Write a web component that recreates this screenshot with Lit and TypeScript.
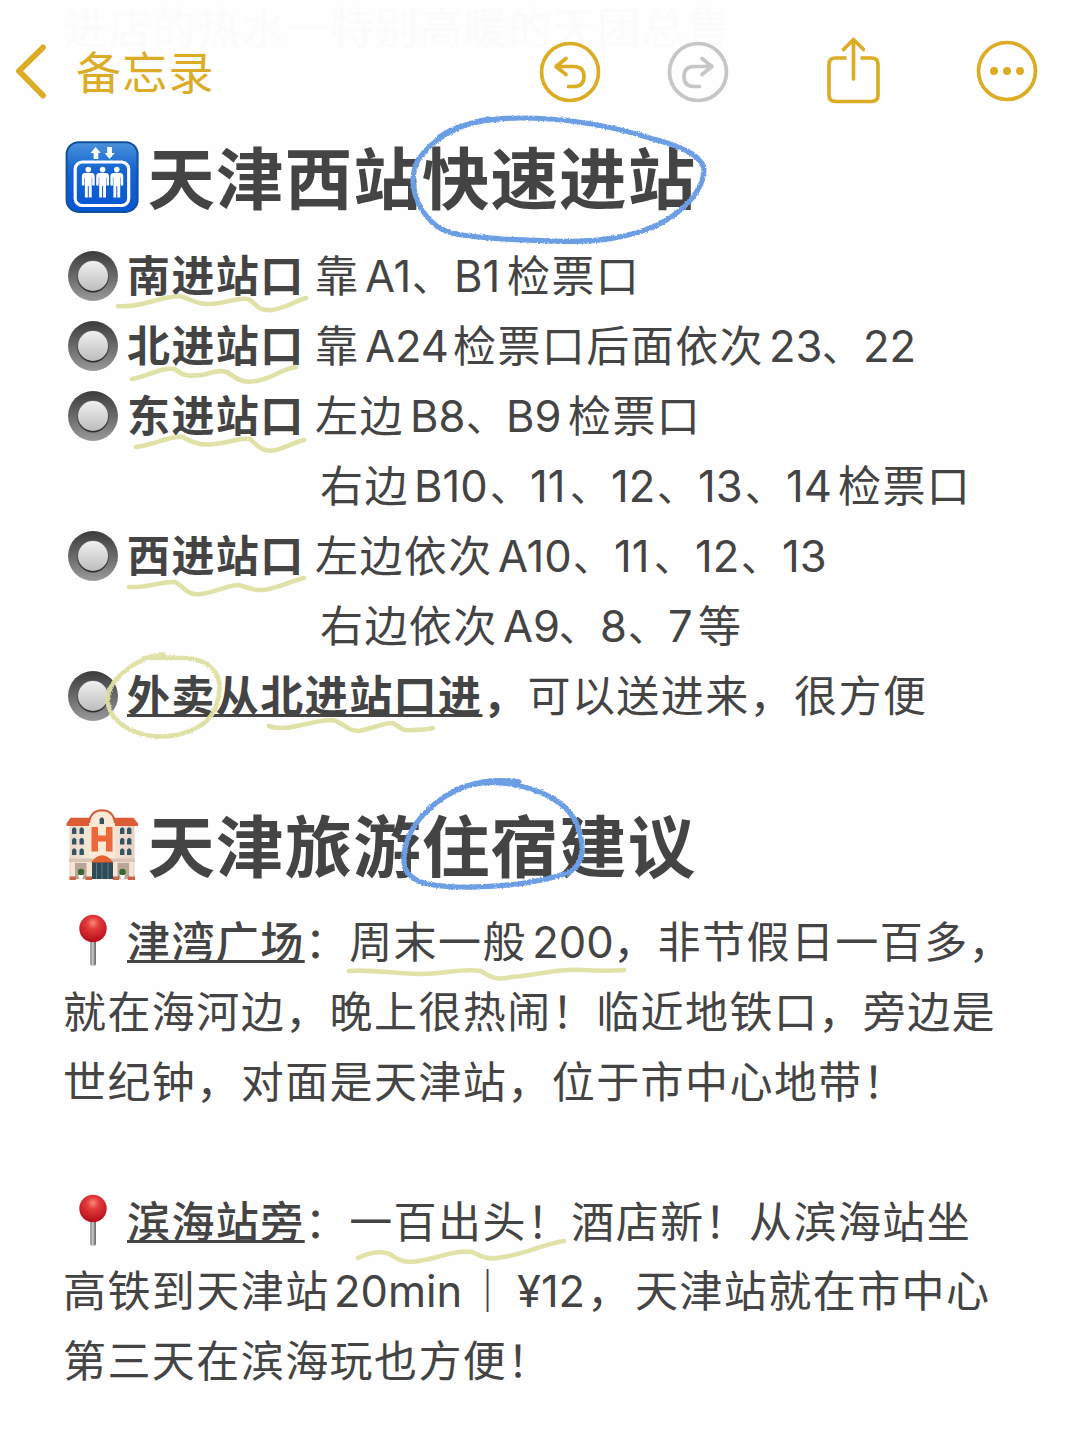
import { LitElement, html, svg, css } from "lit";
import { customElement, property } from "lit/decorators.js";
import { classMap } from "lit/directives/class-map.js";
import { styleMap } from "lit/directives/style-map.js";

interface Run {
  t: string;
  /** Advance width in pixels; natural width when left out. */
  w?: number;
  kind?: "latin" | "bold" | "medium" | "under" | "boldunder" | "bar" | "pause" | "stop";
}
interface Line {
  icon?: "radio" | "pin";
  indent?: boolean;
  runs: Run[];
}

const c = (t: string, w?: number): Run => ({ t, w });
const p = (w: number): Run => ({ t: "、", w, kind: "pause" });
const l = (t: string, w: number): Run => ({ t, w, kind: "latin" });
const b = (t: string, w = 188): Run => ({ t, w, kind: "bold" });

const STATION: Line[] = [
  { icon: "radio", runs: [b("南进站口"), c("靠", 50), l("A1", 47), p(42), l("B1", 53), c("检票口")] },
  { icon: "radio", runs: [b("北进站口"), c("靠", 50), l("A24", 88), c("检票口后面依次", 316), l("23", 53), p(41), l("22", 52)] },
  { icon: "radio", runs: [b("东进站口"), c("左边", 95), l("B8", 56), p(40), l("B9", 62), c("检票口")] },
  { indent: true, runs: [c("右边", 94), l("B10", 76), p(40), l("11", 40), p(41), l("12", 46), p(41), l("13", 47), p(41), l("14", 52), c("检票口")] },
  { icon: "radio", runs: [b("西进站口"), c("左边依次", 183), l("A10", 75), p(41), l("11", 40), p(41), l("12", 46), p(41), l("13", 47)] },
  { indent: true, runs: [c("右边依次", 183), l("A9", 56), p(41), l("8", 28), p(40), l("7", 30), c("等")] },
  { icon: "radio", runs: [{ t: "外卖从北进站口进", kind: "boldunder" }, b("，", 45), c("可以送进来，很方便")] },
];

const HOTELS: Line[] = [
  { icon: "pin", runs: [{ t: "津湾广场", kind: "under" }, c("："), c("周末一般", 183), l("200", 81), c("，"), c("非节假日一百多，")] },
  { runs: [c("就在海河边，晚上很热闹！临近地铁口，旁边是")] },
  { runs: [c("世纪钟，对面是天津站，位于市中心地带！")] },
  { runs: [] },
  { icon: "pin", runs: [{ t: "滨海站旁", kind: "under" }, c("："), c("一百出头！酒店新！从滨海站坐")] },
  { runs: [c("高铁到天津站", 271), l("20min", 132), { t: "｜", kind: "bar", w: 51 }, { t: "¥12", kind: "latin", w: 70 }, c("，", 48), c("天津站就在市中心")] },
  { runs: [c("第三天在滨海玩也方便！")] },
];

const radioIcon = svg`
  <svg width="52" height="52" viewBox="0 0 52 52">
    <defs>
      <linearGradient id="ring" x1="0" y1="0" x2="0" y2="1">
        <stop offset="0" stop-color="#3c3c3c"></stop><stop offset=".5" stop-color="#696969"></stop><stop offset="1" stop-color="#999"></stop>
      </linearGradient>
      <linearGradient id="knob" x1="0" y1="0" x2="0" y2="1">
        <stop offset="0" stop-color="#f0f0f0"></stop><stop offset="1" stop-color="#bdbdbd"></stop>
      </linearGradient>
      <linearGradient id="lip" x1="0" y1="0" x2="0" y2="1">
        <stop offset="0" stop-color="#777"></stop><stop offset="1" stop-color="#2b2b2b"></stop>
      </linearGradient>
    </defs>
    <circle cx="26" cy="26" r="25" fill="url(#ring)"></circle>
    <circle cx="26" cy="26.5" r="16" fill="url(#lip)"></circle>
    <circle cx="26" cy="26" r="15" fill="url(#knob)"></circle>
  </svg>`;

const pinIcon = svg`
  <svg class="pin" width="52" height="52" viewBox="0 0 52 52">
    <defs>
      <radialGradient id="ball" cx=".5" cy=".3" r=".65">
        <stop offset="0" stop-color="#f98a80"></stop><stop offset=".35" stop-color="#e23b3c"></stop><stop offset="1" stop-color="#b9121f"></stop>
      </radialGradient>
      <linearGradient id="needle" x1="0" y1="0" x2="1" y2="0">
        <stop offset="0" stop-color="#777"></stop><stop offset=".45" stop-color="#ccc"></stop><stop offset="1" stop-color="#555"></stop>
      </linearGradient>
    </defs>
    <rect x="23.3" y="26" width="5.6" height="25.5" rx="1.5" fill="url(#needle)"></rect>
    <circle cx="26" cy="14.5" r="13.7" fill="url(#ball)"></circle>
  </svg>`;

const person = (x: number) => svg`
  <g transform="translate(${x} 0)">
    <circle cx="0" cy="29.6" r="2.8"></circle>
    <path d="M-4 33H4Q6.4 33.3 6.4 36V45.5H3.9V37.5H3.4V57.5H.5V46H-.5V57.5H-3.4V37.5H-3.9V45.5H-6.4V36Q-6.4 33.3-4 33Z"></path>
  </g>`;

const liftIcon = svg`
  <svg width="74" height="74" viewBox="0 0 74 74">
    <defs>
      <linearGradient id="lift" x1="0" y1="0" x2="0" y2="1">
        <stop offset="0" stop-color="#4b92da"></stop><stop offset=".4" stop-color="#1464d2"></stop><stop offset="1" stop-color="#0756d3"></stop>
      </linearGradient>
    </defs>
    <rect x="1.6" y="2.3" width="71" height="69.6" rx="12" fill="url(#lift)" stroke="#11509f" stroke-width="2"></rect>
    <rect x="10.2" y="22" width="53.5" height="43.5" rx="7" fill="none" stroke="#fff" stroke-width="3.2"></rect>
    <g fill="#fff">
      ${person(23.3)}${person(37.6)}${person(51.8)}
      <path d="M30.6 7L35.8 13H33.3V19H28.6V13H25.6Z"></path>
      <path d="M44.5 19L39.6 13H42.2V7H46.9V13H49.7Z"></path>
    </g>
  </svg>`;

const win = (x: number, y: number) => svg`<path d="M${x} ${y + 7}V${y + 2}Q${x + 2.2} ${y - 1.5} ${x + 4.4} ${y + 2}V${y + 7}Z"></path>`;

const hotelIcon = svg`
  <svg width="74" height="74" viewBox="0 0 74 74">
    <defs>
      <linearGradient id="wall" x1="0" y1="0" x2="1" y2="0">
        <stop offset="0" stop-color="#ead7c9"></stop><stop offset=".5" stop-color="#fdf0dc"></stop><stop offset="1" stop-color="#e6d0c2"></stop>
      </linearGradient>
    </defs>
    <path d="M4.5 15H69.5V71.5H4.5Z" fill="url(#wall)"></path>
    <path d="M5.5 9.7H68.500L73 15.500V18H1.500V15.500Z" fill="#dd5b35"></path>
    <path d="M24 71V13Q26 3 37 2.600Q48 3 50 13V71Z" fill="#fbe9d5"></path>
    <path d="M24 15Q25.500 2.400 37 2.200Q48.500 2.400 50 15" fill="none" stroke="#d2593b" stroke-width="2"></path>
    <path d="M26.500 19H33V27.500H41V19H47.500V43.500H41V33.500H33V43.500H26.500Z" fill="#ee6739"></path>
    <g fill="#355463">
      ${win(7, 19)}${win(14.500, 19)}${win(55, 19)}${win(62, 19)}
      ${win(7, 29.500)}${win(14.500, 29.500)}${win(55, 29.500)}${win(62, 29.500)}
      ${win(7, 40)}${win(14.500, 40)}${win(55, 40)}${win(62, 40)}
      ${win(34.600, 9)}
    </g>
    <path d="M4 50.500H70V54H4Z" fill="#d9c3b6"></path>
    <path d="M10 55H22V71H10ZM51 55H64V71H51Z" fill="#b9a69b"></path>
    <path d="M27 54H48V71H27Z" fill="#2d4b59"></path>
    <path d="M37 55V71M31.500 55V71M43 55V71" stroke="#617b83" stroke-width="1"></path>
    <path d="M26 54.500Q37 40 48.500 54.500Z" fill="#e4622f"></path>
    <path d="M6 54H10V69H6ZM21.500 54H26V69H21.500ZM48.500 54H52.500V69H48.500ZM64.500 54H68.500V69H64.500Z" fill="#f6e4d4"></path>
    <path d="M4.500 68.500H11V72H4.500ZM20.500 68.500H27V72H20.500ZM48 68.500H54V72H48ZM63 68.500H70V72H63Z" fill="#c9634a"></path>
    <circle cx="16" cy="64" r="3.200" fill="#36682f"></circle><circle cx="57.500" cy="64" r="3.200" fill="#36682f"></circle>
    <path d="M13.500 67H18.500L17.500 71H14.500ZM55 67H60L59 71H56Z" fill="#fff"></path>
  </svg>`;

const doodles = svg`
  <svg class="ink" width="1080" height="1440" viewBox="0 0 1080 1440" fill="none" stroke-linecap="round" stroke-linejoin="round" aria-hidden="true">
    <defs>
      <filter id="chalk" x="0" y="0" width="1080" height="1440" filterUnits="userSpaceOnUse">
        <feTurbulence type="fractalNoise" baseFrequency=".55" numOctaves="2" seed="4" result="n"></feTurbulence>
        <feDisplacementMap in="SourceGraphic" in2="n" scale="3" xChannelSelector="R" yChannelSelector="G"></feDisplacementMap>
      </filter>
    </defs>
    <g stroke="#6c9ee6" stroke-width="5.200" filter="url(#chalk)">
      <path d="M489 119C458 124 431 140 418 160C407 182 416 207 432 222C446 237 473 236 502 239C545 240 590 246 632 234C675 223 704 194 704 168C699 151 670 144 650 138C605 124 560 118 520 118C490 118 455 124 438 138"></path>
      <path d="M519 782C480 776 448 789 425 813C408 830 401 852 405 868C411 883 430 886 457 887C500 888 540 882 568 873C586 864 584 842 577 825C568 801 539 789 510 784C488 781 470 783 455 790"></path>
    </g>
    <g stroke="#dfe0a2" stroke-width="4.600" opacity=".95">
      <path d="M118 306C140 308 158 297 180 296C194 300 194 304 211 304C228 303 237 297 248 299C258 304 256 311 272 310C286 308 295 301 306 298"></path>
      <path d="M132 379C150 376 160 367 175 369C184 377 190 376 202 375C212 373 219 369 227 372C236 378 242 384 256 381C274 378 281 369 296 367"></path>
      <path d="M136 447C155 445 171 435 183 437C192 443 201 446 214 444C229 443 240 437 250 439C258 446 263 453 276 450C287 447 292 443 304 440"></path>
      <path d="M129 587C148 588 162 581 175 582C185 587 186 596 201 594C216 592 228 585 239 585C249 588 257 592 269 589C282 586 292 581 304 578"></path>
      <path d="M269 726C287 733 310 720 333 720C344 723 347 731 358 731C373 729 382 723 393 723C401 728 402 731 411 730C421 730 427 730 433 728"></path>
      <path d="M349 971C370 969 398 974 420 974C447 974 460 968 481 971C490 976 494 981 512 977C544 974 560 968 583 970C600 971 613 971 624 970"></path>
      <path d="M358 1258C371 1252 382 1251 390 1254C399 1261 408 1264 424 1260C441 1257 455 1250 472 1252C484 1258 490 1260 503 1257C526 1254 543 1244 564 1241"></path>
      <g filter="url(#chalk)">
      <path d="M163 654C143 656 117 672 109 691C103 711 118 728 145 735C180 741 209 727 216 706C223 685 220 670 203 662C190 656 174 658 144 658"></path>
      </g>
    </g>
  </svg>`;

@customElement("note-line")
class NoteLine extends LitElement {
  @property({ attribute: false }) line!: Line;

  static styles = css`
    :host { display: block; height: 69.9px; }
    .line { display: flex; align-items: center; height: 100%; }
    .icon { flex: none; width: 60px; height: 52px; margin-left: 4px; }
    .icon svg { display: block; }
    .icon .pin { margin-top: -2px; }
    .indent { flex: none; width: 257px; }
    .run { flex: none; display: block; white-space: nowrap; line-height: 64px; padding-bottom: 6px; }
    .latin { font-family: Inter, "Noto Sans CJK SC", sans-serif; letter-spacing: 0; font-size: 43.5px; padding-bottom: 0; }
    .pause { font-size: 39px; letter-spacing: 0; padding-bottom: 4px; }
    .bold, .boldunder { font-weight: 700; }
    .under { font-weight: 500; }
    .under, .boldunder {
      text-decoration: underline; text-decoration-thickness: 2.700px;
      text-underline-offset: 2px; text-decoration-skip-ink: none;
    }
  `;

  render() {
    const { icon, indent, runs } = this.line;
    return html`<div class="line">
      ${icon ? html`<span class="icon">${icon === "radio" ? radioIcon : pinIcon}</span>` : ""}
      ${indent ? html`<span class="indent"></span>` : ""}
      ${runs.map((r) => html`<span
        class=${classMap({ run: true, [r.kind ?? "plain"]: true })}
        style=${styleMap(r.w ? { width: `${r.w}px` } : {})}>${r.t}</span>`)}
    </div>`;
  }
}

@customElement("app-root")
class AppRoot extends LitElement {
  static styles = css`
    :host {
      display: block; position: relative; width: 1080px; height: 1440px; overflow: hidden;
      background: #fefefe; color: #444;
      font: 400 43px/70px "Noto Sans CJK SC", sans-serif; letter-spacing: 1.430px;
    }
    .scrolled { position: absolute; left: 64px; top: 4px; line-height: 42px; color: #fbfbfb; white-space: nowrap; }
    .bar { position: relative; display: flex; align-items: center; height: 142px; padding-left: 14px; box-sizing: border-box; color: #dcac25; }
    .bar svg { display: block; flex: none; }
    .back { font-size: 45px; line-height: 66px; letter-spacing: 1.300px; margin-left: 28px; width: 462px; }
    .redo { margin-left: 63.500px; color: #c6c6c6; }
    .share { margin-left: 94.500px; }
    .more { margin-left: 91px; }
    .note { position: relative; margin-top: -3px; padding-left: 63px; }
    .title { display: flex; align-items: center; height: 76px; font-size: 67.500px; font-weight: 700; letter-spacing: 1.100px; white-space: nowrap; }
    .title span { margin-left: 8.500px; line-height: 72px; padding-bottom: 4px; }
    .title svg { margin-left: 2px; }
    .list { padding-top: 26.300px; }
    .section { padding-top: 76px; }
    .section .list { padding-top: 25px; }
    .section note-line { height: 69.800px; }
    .ink { position: absolute; left: 0; top: 0; pointer-events: none; }
  `;

  render() {
    return html`
      <div class="scrolled">进店的热水一特别高暖的天团总售</div>
      <header class="bar">
        <svg width="34" height="56" viewBox="0 0 34 56" fill="none" stroke="currentColor" stroke-width="5.900" stroke-linecap="round" stroke-linejoin="round"><path d="M29 4.500L5 28L29 52.500"></path></svg>
        <span class="back">备忘录</span>
        <svg width="64" height="64" viewBox="0 0 64 64" fill="none" stroke="currentColor" stroke-width="3.700" stroke-linecap="round" stroke-linejoin="round">
          <circle cx="32" cy="33" r="28.500"></circle><path d="M28 19.500L18 27.500L28 35.500M19 27.500H35.500Q46 27.500 46 37.500Q46 47.500 35.500 47.500H30.500"></path></svg>
        <svg class="redo" width="64" height="64" viewBox="0 0 64 64" fill="none" stroke="currentColor" stroke-width="3.700" stroke-linecap="round" stroke-linejoin="round">
          <circle cx="32" cy="33" r="28.500"></circle><path d="M36 19.500L46 27.500L36 35.500M45 27.500H28.500Q18 27.500 18 37.500Q18 47.500 28.500 47.500H33.500"></path></svg>
        <svg class="share" width="60" height="72" viewBox="0 0 60 72" fill="none" stroke="currentColor" stroke-width="3.700" stroke-linecap="round" stroke-linejoin="round">
          <path stroke-linecap="butt" d="M22.500 23H11.500Q5 23 5 29.500V60Q5 66.500 11.500 66.500H47.500Q54 66.500 54 60V29.500Q54 23 47.500 23H36.500"></path><path d="M29.500 44V4.500M19.500 14.500L29.500 4.500L39.500 14.500"></path></svg>
        <svg class="more" width="64" height="64" viewBox="0 0 64 64" fill="none" stroke="currentColor" stroke-width="3.700">
          <circle cx="32" cy="32" r="28.500"></circle><g fill="currentColor" stroke="none"><circle cx="19" cy="32" r="4"></circle><circle cx="32" cy="32" r="4"></circle><circle cx="45" cy="32" r="4"></circle></g></svg>
      </header>
      <main class="note">
        <div class="title">${liftIcon}<span>天津西站快速进站</span></div>
        <div class="list">${STATION.map((x) => html`<note-line .line=${x}></note-line>`)}</div>
        <div class="section">
          <div class="title">${hotelIcon}<span>天津旅游住宿建议</span></div>
          <div class="list">${HOTELS.map((x) => html`<note-line .line=${x}></note-line>`)}</div>
        </div>
      </main>
      ${doodles}`;
  }
}
